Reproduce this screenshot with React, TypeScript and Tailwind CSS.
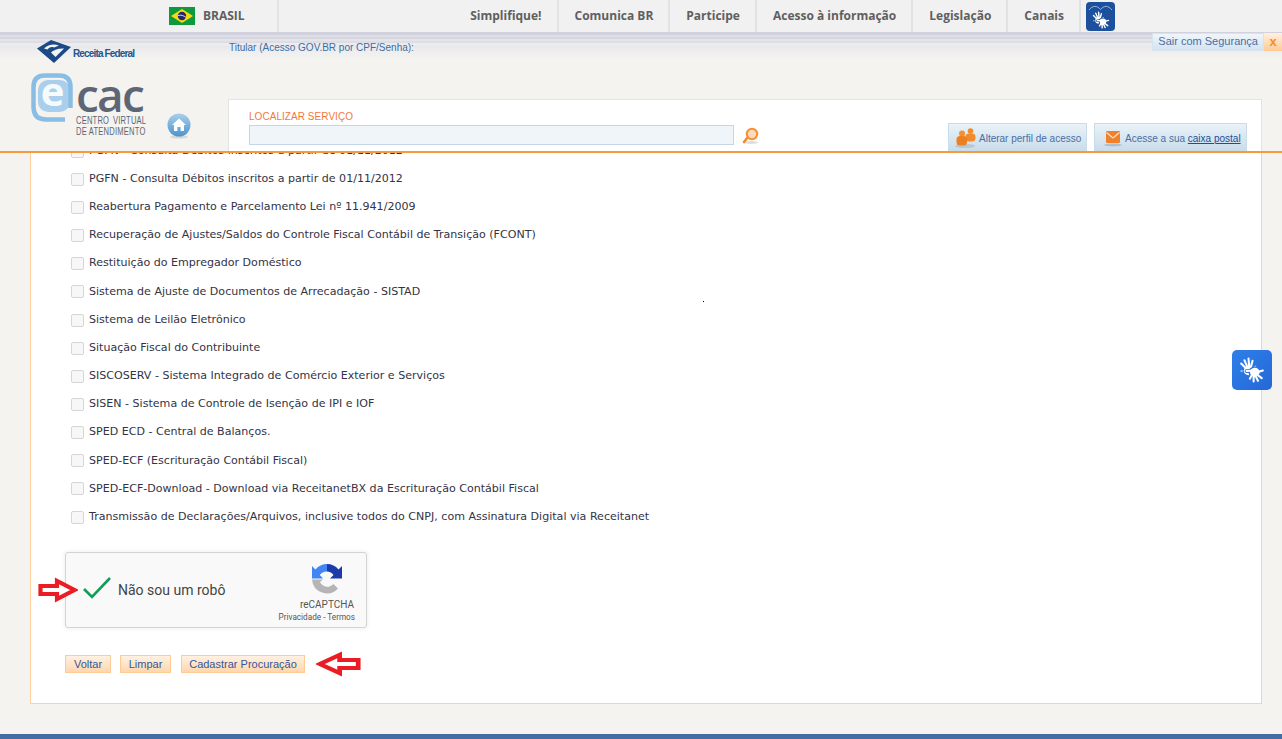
const servicos = [
  "PGFN - Consulta Débitos inscritos a partir de 01/11/2012",
  "PGFN - Consulta Débitos inscritos a partir de 01/11/2012",
  "Reabertura Pagamento e Parcelamento Lei nº 11.941/2009",
  "Recuperação de Ajustes/Saldos do Controle Fiscal Contábil de Transição (FCONT)",
  "Restituição do Empregador Doméstico",
  "Sistema de Ajuste de Documentos de Arrecadação - SISTAD",
  "Sistema de Leilão Eletrônico",
  "Situação Fiscal do Contribuinte",
  "SISCOSERV - Sistema Integrado de Comércio Exterior e Serviços",
  "SISEN - Sistema de Controle de Isenção de IPI e IOF",
  "SPED ECD - Central de Balanços.",
  "SPED-ECF (Escrituração Contábil Fiscal)",
  "SPED-ECF-Download - Download via ReceitanetBX da Escrituração Contábil Fiscal",
  "Transmissão de Declarações/Arquivos, inclusive todos do CNPJ, com Assinatura Digital via Receitanet",
];

const menu = ["Simplifique!", "Comunica BR", "Participe", "Acesso à informação", "Legislação", "Canais"];

function Flag() {
  return (
    <svg width="26" height="18" viewBox="0 0 26 18">
      <rect width="26" height="18" fill="#0d9a3c" />
      <polygon points="13,2 24,9 13,16 2,9" fill="#f8d90f" />
      <circle cx="13" cy="9" r="4.2" fill="#26276f" />
      <path d="M9 8.4c3-.6 5.8.2 8 2" stroke="#fff" strokeWidth="0.8" fill="none" />
    </svg>
  );
}

function HandShapes({ bg }: { bg: string }) {
  const rightHand = "M15 14.5L22 12.5M15.5 15.5L21 19.5M14.5 16L17.5 22M13.5 16L13.5 22.5M12.5 15.5L10 20M13 12.5L7 13";
  return (
    <g fill="none" strokeLinecap="round">
      <path d="M8 12L2 6M8.5 11L5 3M9.5 10.5L8.8 1.5M10.5 11L12.5 3.5M11 13l4-4" stroke="#fff" strokeWidth="1.9" />
      <ellipse cx="8.6" cy="12.6" rx="4.2" ry="4.2" fill="#fff" />
      <circle cx="2.4" cy="13" r="1.1" fill="#fff" opacity="0.55" />
      <g stroke={bg} strokeWidth="3.6">
        <path d={rightHand} />
        <ellipse cx="14.6" cy="14" rx="4" ry="3.6" />
      </g>
      <path d={rightHand} stroke="#fff" strokeWidth="1.9" />
      <ellipse cx="14.6" cy="14" rx="4.4" ry="4" fill="#fff" />
    </g>
  );
}

function ReceitaLogo() {
  return (
    <div className="flex items-center">
      <svg width="36" height="24" viewBox="0 0 36 24">
        <polygon points="0,8.5 14,0 34,7 17,23" fill="#1c4a86" />
        <path d="M7 8.5C11 5 16 3.5 22 5.5L17 7.5C14 6.5 12 7.5 10.5 9.5z" fill="#f4f3ef" />
        <path d="M14 12.5C18 9 22 8.5 27 8.5L18.5 17z" fill="#f4f3ef" />
      </svg>
      <span className="mt-[3px] font-['Liberation_Sans',sans-serif] text-[10px] font-bold tracking-[-0.85px] text-[#25558f]">
        Receita Federal
      </span>
    </div>
  );
}

function EcacLogo() {
  return (
    <div className="flex">
      <svg width="42" height="50" viewBox="0 0 42 50" className="shrink-0 overflow-visible">
        <rect x="7" y="7" width="32" height="32" rx="10" fill="#a9cfec" />
        <path d="M39.5 35V14Q39.5 2.5 28 2.5H14Q2.5 2.5 2.5 14V34Q2.5 46.5 15 46.5H34" fill="none" stroke="#8abde3" strokeWidth="4.5" />
        <text x="21.5" y="33" fontSize="40" fontWeight="700" textAnchor="middle" fill="#f5fafd" fontFamily="Open Sans, sans-serif">
          e
        </text>
      </svg>
      <div className="ml-[3px] flex flex-col font-['Open_Sans',sans-serif] text-[#5e6675]">
        <span className="mt-[-5px] h-[47px] text-[46px] font-semibold leading-[52px] tracking-[-1.8px]">cac</span>
        <span className="h-[10.5px] origin-left scale-x-[0.72] whitespace-nowrap font-['Liberation_Sans',sans-serif] text-[10.5px] leading-[10.5px] tracking-[0.3px] [word-spacing:2px]">
          CENTRO VIRTUAL
        </span>
        <span className="h-[10.5px] origin-left scale-x-[0.72] whitespace-nowrap font-['Liberation_Sans',sans-serif] text-[10.5px] leading-[10.5px] tracking-[0.3px]">
          DE ATENDIMENTO
        </span>
      </div>
    </div>
  );
}

function HomeIcon() {
  return (
    <svg width="24" height="26" viewBox="0 0 24 26">
      <defs>
        <linearGradient id="homeGrad" x1="0" y1="0" x2="0" y2="1">
          <stop offset="0" stopColor="#a9d0ea" />
          <stop offset="1" stopColor="#4d94cc" />
        </linearGradient>
      </defs>
      <ellipse cx="12" cy="24" rx="9" ry="1.6" fill="#d8d8d4" />
      <circle cx="12" cy="12" r="11.5" fill="url(#homeGrad)" />
      <path d="M12 5.5l7 6.5h-2v6h-3.4v-4h-3.2v4H7v-6H5z" fill="#fff" />
    </svg>
  );
}

function SearchIcon() {
  return (
    <svg width="18" height="18" viewBox="0 0 18 18">
      <ellipse cx="9" cy="15.5" rx="7" ry="1.5" fill="#dcdcdc" />
      <path d="M2 15l4-5" stroke="#f28a2e" strokeWidth="2.6" strokeLinecap="round" />
      <circle cx="10" cy="7" r="5.2" fill="#ffd9bf" stroke="#f5922f" strokeWidth="2" />
    </svg>
  );
}

function PeopleIcon() {
  return (
    <svg width="24" height="24" viewBox="0 0 24 24">
      <ellipse cx="10" cy="20" rx="10" ry="2" fill="#b7c7d6" />
      <circle cx="15.5" cy="5" r="2.8" fill="#f28a2e" />
      <rect x="10.5" y="7.5" width="10" height="8" rx="3.5" fill="#f28a2e" />
      <circle cx="7" cy="7.5" r="3" fill="#f5902f" />
      <rect x="1.5" y="10" width="10.5" height="9.5" rx="3.5" fill="#ee7f1f" />
    </svg>
  );
}

function MailIcon() {
  return (
    <svg width="20" height="20" viewBox="0 0 20 20">
      <ellipse cx="9" cy="17" rx="9" ry="1.5" fill="#aebfd0" />
      <rect x="2" y="3" width="14" height="12" rx="1" fill="#f0802a" />
      <path d="M2.5 4.5l6.5 5.5 6.5-5.5" fill="none" stroke="#fde3cd" strokeWidth="1.3" />
    </svg>
  );
}

function RedArrow({ flip, width }: { flip?: boolean; width: number }) {
  return (
    <svg
      width={width}
      height="26"
      viewBox="0 0 40 26"
      preserveAspectRatio="none"
      className={flip ? "-scale-x-100" : ""}
    >
      <polygon points="2.5,9 19,9 19,4 36.5,13 19,22 19,17 2.5,17" fill="#fff" stroke="#ec1c24" strokeWidth="4.2" />
    </svg>
  );
}

function Recaptcha() {
  return (
    <svg width="32" height="32" viewBox="0 0 32 32">
      <path d="M16 1a15 15 0 0 1 11.5 5.5L31 3v12.5H19l3.5-3.5A8 8 0 0 0 16 8.5z" fill="#1c3aa9" />
      <path d="M16 1A15 15 0 0 0 4.5 6.5L1 3v12.5h11L8.8 12A8.5 8.5 0 0 1 16 8.5z" fill="#4285f4" />
      <path d="M1 16.5a15 15 0 0 0 26 9l-4.6-4.6A8 8 0 0 1 9 19l3-2.5z" fill="#b5b5b5" />
    </svg>
  );
}

function Servico({ label }: { label: string }) {
  return (
    <label className="flex h-[28.17px] items-center">
      <span className="h-[13px] w-[13px] shrink-0 rounded-[2px] border border-[#d6d6d6] bg-[#f7f7f7]" />
      <span className="ml-[5px] whitespace-nowrap">{label}</span>
    </label>
  );
}

function AcaoButton({ label, className }: { label: string; className: string }) {
  return (
    <button
      className={`h-[18px] border border-[#fdcb94] bg-gradient-to-b from-[#fff1e3] to-[#fed6ac] font-['Liberation_Sans',sans-serif] text-[11px] leading-[14px] text-[#34579b] ${className}`}
    >
      {label}
    </button>
  );
}

export default function App() {
  return (
    <div className="relative flex h-[739px] flex-col overflow-hidden bg-[#f4f3ef]">
      <header className="relative z-10 shrink-0">
        <div className="flex h-[32px] bg-[#f1f1f1] pl-[169px] pr-[167px] font-['Open_Sans',sans-serif] text-[#5f5f5f]">
          <div className="flex items-center border-r-2 border-[#e2e2e2] pr-[32px]">
            <Flag />
            <span className="ml-[8px] text-[12px] font-bold">BRASIL</span>
          </div>
          <nav className="flex flex-1 justify-end">
            {menu.map((item) => (
              <a
                key={item}
                className="flex items-center whitespace-nowrap border-r-2 border-[#e2e2e2] pl-[16px] pr-[15px] text-[12px] font-bold"
              >
                {item}
              </a>
            ))}
            <div className="ml-[5px] mt-[2px] flex h-[29px] w-[29px] items-center justify-center rounded-[4px] bg-[#1c4f9c]">
              <svg width="29" height="29" viewBox="0 0 29 29">
                <path d="M3 8C7 3 11 3.5 14.5 7.5 18 3.5 22 3 26 8" fill="none" stroke="#b9cde6" strokeWidth="0.8" />
                <g transform="translate(6 9) scale(0.75)">
                  <HandShapes bg="#1c4f9c" />
                </g>
              </svg>
            </div>
          </nav>
        </div>

        <div className="relative flex h-[121px] border-b-2 border-[#f79a3e] bg-[linear-gradient(#d2d2de_0,#d2d2de_3px,#dfdfe7_3px,#dfdfe7_5px,#d6d6e1_5px,#d6d6e1_7px,#e4e4ea_7px,#e4e4ea_9px,#dddde5_9px,#dddde5_11px,#ececef_11px,#ececef_14px,#e8e8ec_14px,#eeeeef_19px,#f4f3ef_28px)]">
          <div className="w-[228px] shrink-0 pl-[30px] pt-[8px]">
            <div className="pl-[7px]">
              <ReceitaLogo />
            </div>
            <div className="relative mt-[9px] pl-[1px]">
              <EcacLogo />
              <div className="absolute left-[137px] top-[40px]">
                <HomeIcon />
              </div>
            </div>
          </div>

          <div className="flex flex-1 flex-col pr-[20px]">
            <p className="mt-[10px] h-[57px] pl-[1px] font-['Liberation_Sans',sans-serif] text-[10px] leading-[11px] text-[#3a6ea5]">
              Titular (Acesso GOV.BR por CPF/Senha):
            </p>
            <div className="flex flex-1 items-end justify-between overflow-hidden border-x border-t border-[#e3e3e0] bg-white pl-[20px] pr-[14px]">
              <div className="self-start pt-[11px]">
                <p className="font-['Liberation_Sans',sans-serif] text-[10px] leading-[12px] tracking-[0.05px] text-[#f3783a]">
                  LOCALIZAR SERVIÇO
                </p>
                <div className="mt-[2px] flex items-center">
                  <div className="h-[20px] w-[485px] border border-[#c5d7e6] bg-[#f0f5fa]" />
                  <span className="ml-[8px] mt-[2px]">
                    <SearchIcon />
                  </span>
                </div>
              </div>
              <div className="flex gap-[7px] font-['Liberation_Sans',sans-serif] text-[10px] text-[#4a6ea5]">
                <div className="flex h-[28px] w-[139px] items-center border-x border-t border-[#c8dcea] bg-gradient-to-b from-[#eaf2f8] to-[#c9dcea] pl-[6px]">
                  <PeopleIcon />
                  <span className="whitespace-nowrap pt-[2px]">Alterar perfil de acesso</span>
                </div>
                <div className="flex h-[28px] w-[153px] items-center border-x border-t border-[#c8dcea] bg-gradient-to-b from-[#eaf2f8] to-[#c9dcea] pl-[9px]">
                  <MailIcon />
                  <span className="ml-[1px] whitespace-nowrap pt-[2px]">
                    Acesse a sua <span className="text-[#1b4f9c] underline">caixa postal</span>
                  </span>
                </div>
              </div>
            </div>
          </div>

          <div className="absolute right-0 top-[1px] flex h-[18px] items-stretch font-['Liberation_Sans',sans-serif] text-[11px] text-[#4a6ea5]">
            <span className="flex items-center whitespace-nowrap border border-[#d5e4ef] bg-gradient-to-b from-[#f0f5fa] to-[#d4e4f0] px-[5px] pb-[2px]">
              Sair com Segurança
            </span>
            <span className="flex w-[18px] items-center justify-center bg-gradient-to-b from-[#fff0e0] to-[#fdcb94] pb-[1px] text-[13px] font-bold text-[#f7901e]">
              x
            </span>
          </div>
        </div>
      </header>

      <main className="relative ml-[30px] mr-[20px] h-[551px] shrink-0 border-x border-b border-[#fdd09c] bg-white">
        <div className="mt-[-16px] pl-[40px] font-['DejaVu_Sans',sans-serif] text-[11.07px] text-[#333344]">
          {servicos.map((s, i) => (
            <Servico key={i} label={s} />
          ))}
        </div>
        <span className="absolute left-[672px] top-[148px] h-[1px] w-[1px] bg-black" />

        <div className="relative ml-[34px] mt-[20.5px] flex h-[76px] w-[302px] rounded-[3px] border border-[#d3d3d3] bg-[#f9f9f9] shadow-[0_0_4px_1px_rgba(0,0,0,0.06)]">
          <svg width="30" height="24" viewBox="0 0 30 24" className="ml-[16px] mt-[23px]">
            <path d="M2 13l8 8L28 2" fill="none" stroke="#0f9d58" strokeWidth="2.6" />
          </svg>
          <span className="ml-[6px] mt-[28px] font-['Roboto',sans-serif] text-[14px] leading-[18px] text-[#444]">
            Não sou um robô
          </span>
          <div className="ml-auto mr-[12px] flex w-[54px] flex-col items-center pt-[10px] font-['Roboto',sans-serif] text-[#555]">
            <Recaptcha />
            <span className="mt-[4px] text-[10px] leading-[12px]">reCAPTCHA</span>
            <span className="mr-[-1px] self-end whitespace-nowrap text-[8.2px] leading-[12px]">
              Privacidade - Termos
            </span>
          </div>
          <div className="absolute left-[-28px] top-[24px]">
            <RedArrow width={40} />
          </div>
        </div>

        <div className="ml-[34px] mt-[23px] flex items-center">
          <AcaoButton label="Voltar" className="w-[46px]" />
          <AcaoButton label="Limpar" className="ml-[9px] w-[51px]" />
          <AcaoButton label="Cadastrar Procuração" className="ml-[10px] w-[124px]" />
          <span className="ml-[11px] flex">
            <RedArrow flip width={45} />
          </span>
        </div>
      </main>

      <div className="flex-1" />
      <footer className="h-[5px] shrink-0 bg-[#436ea5]" />

      <button className="absolute left-[1232px] top-[350px] flex h-[40px] w-[40px] items-center justify-center rounded-[5px] bg-gradient-to-br from-[#2f7fea] to-[#2468d6]">
        <svg width="26" height="26" viewBox="0 0 24 24">
          <HandShapes bg="#2a74e0" />
        </svg>
      </button>
    </div>
  );
}
